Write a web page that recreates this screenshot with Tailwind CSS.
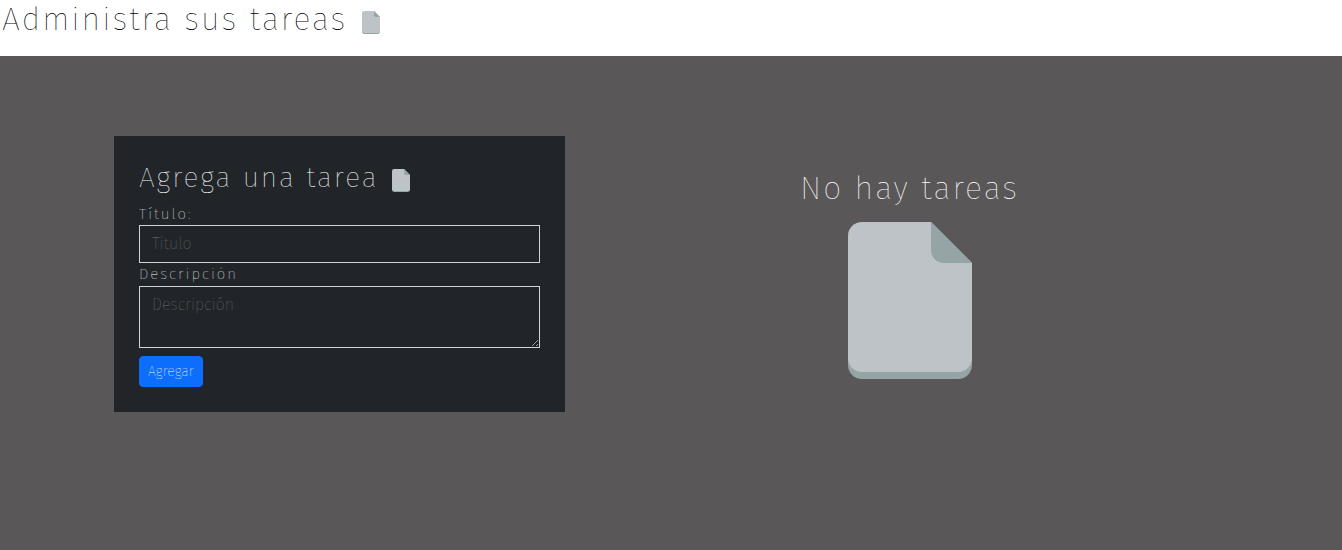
<!DOCTYPE html>
<html lang="es">
<head>
<meta charset="utf-8">
<meta name="viewport" content="width=device-width, initial-scale=1">
<title>Administra sus tareas</title>
<script src="https://cdn.jsdelivr.net/npm/@tailwindcss/browser@4"></script>
</head>
<body class="flex min-h-screen flex-col bg-[#5a5758] font-['Fira_Sans','Open_Sans','Noto_Sans',sans-serif] font-extralight text-white">
<svg class="hidden" aria-hidden="true">
  <symbol id="file" viewBox="0 0 124 157">
    <path fill="#95a5a5" d="M0 80h124v63a14 14 0 0 1-14 14H14a14 14 0 0 1-14-14z"/>
    <path fill="#bdc3c7" d="M14 0H83L124 41V136a14 14 0 0 1-14 14H14a14 14 0 0 1-14-14V14A14 14 0 0 1 14 0z"/>
    <path fill="#95a5a5" d="M83 0L124 41H96a13 13 0 0 1-13-13z"/>
  </symbol>
</svg>
<header class="flex h-14 items-start gap-[15px] bg-white pl-0.5 text-black">
  <h1 class="text-[32px] leading-[38px] font-thin tracking-[2px]">Administra sus tareas</h1>
  <svg class="mt-[11px] h-[23px] w-[18px]" aria-hidden="true"><use href="#file"/></svg>
</header>
<main class="mx-auto grid w-full max-w-[1142px] grid-cols-12 pt-20 pl-0.5">
  <section class="col-span-5 px-3">
    <form class="flex flex-col items-start bg-[#212529] p-[25px]">
      <div class="mb-2 flex gap-[14px]">
        <h2 class="text-[28px] leading-[34px] tracking-[2px]">Agrega una tarea</h2>
        <svg class="mt-2 h-[23px] w-[18px]" aria-hidden="true"><use href="#file"/></svg>
      </div>
      <label for="titulo" class="text-[15px] leading-[22px] tracking-[2px]">Título:</label>
      <input id="titulo" type="text" placeholder="Título" class="h-[38px] w-full border border-[#ced4da] bg-transparent px-3 pb-0.5 text-base placeholder:text-[#6c757d]">
      <label for="descripcion" class="text-[15px] leading-[23px] tracking-[2px]">Descripción</label>
      <textarea id="descripcion" rows="2" placeholder="Descripción" class="mb-2 block h-[62px] w-full resize-y border border-[#ced4da] bg-transparent px-3 py-1.5 text-base placeholder:text-[#6c757d]"></textarea>
      <button type="submit" class="h-[31px] rounded border border-[#0d6efd] bg-[#0d6efd] px-2 text-sm">Agregar</button>
    </form>
  </section>
  <section class="col-span-7 flex flex-col items-center pt-[33px]">
    <h2 class="text-[32px] leading-[38px] tracking-[2px]">No hay tareas</h2>
    <svg class="mt-[15px] h-[157px] w-[124px]" aria-hidden="true"><use href="#file"/></svg>
  </section>
</main>
</body>
</html>
